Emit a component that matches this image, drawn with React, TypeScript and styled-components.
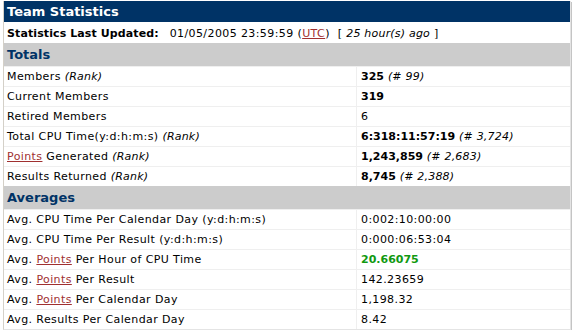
import React from "react";
import styled, { createGlobalStyle } from "styled-components";

const Global = createGlobalStyle`
  html, body { margin: 0; padding: 0; background: #ffffff; }
  body { font-family: "DejaVu Sans", Verdana, sans-serif; font-size: 11px; color: #000; }
`;

const Page = styled.div`
  padding: 1px 0 0 3px;
  width: 571px;
  box-sizing: border-box;
`;

const Panel = styled.div`
  border-left: 1px solid #d4d0c8;
  border-right: 1px solid #e4e4e4;
  border-bottom: 1px solid #e4e4e4;
  box-shadow: 1px 1px 0 #c4c4c4;
`;

const TitleBar = styled.div`
  height: 21px;
  background: #003366;
  color: #ffffff;
  font-weight: bold;
  font-size: 13px;
  line-height: 21px;
  padding-left: 3px;
`;

const UpdatedRow = styled.div`
  height: 20px;
  padding: 1px 0 0 3px;
  line-height: 21px;
  white-space: nowrap;
  letter-spacing: 0.4px;
`;

const Label = styled.b`
  margin-right: 11px;
  letter-spacing: 0.1px;
`;

const Link = styled.a`
  color: #a03030;
  text-decoration: underline;
`;

const Table = styled.table`
  width: 100%;
  border-collapse: separate;
  border-spacing: 0;
  table-layout: fixed;
`;

const SectionHeader = styled.th`
  box-sizing: border-box;
  background: #cccccc;
  color: #003366;
  font-size: 13px;
  font-weight: bold;
  text-align: left;
  height: 23px;
  padding: 0 0 0 3px;
`;

const Cell = styled.td<{ $value?: boolean }>`
  box-sizing: border-box;
  height: 20px;
  padding: 0 0 0 ${(p) => (p.$value ? "4px" : "3px")};
  border-top: 1px solid #efefef;
  border-left: ${(p) => (p.$value ? "1px solid #efefef" : "none")};
  white-space: nowrap;
  vertical-align: middle;
  letter-spacing: 0.4px;
`;

const Strong = styled.b<{ $green?: boolean }>`
  color: ${(p) => (p.$green ? "#119911" : "inherit")};
  letter-spacing: 0;
`;

const Note = styled.i`
  letter-spacing: 0.2px;
`;

const P = () => <Link href="#">Points</Link>;

type Row = { label: React.ReactNode; value: React.ReactNode };

const totals: Row[] = [
  { label: <>Members <Note>(Rank)</Note></>, value: <><Strong>325</Strong> <Note>(# 99)</Note></> },
  { label: "Current Members", value: <Strong>319</Strong> },
  { label: "Retired Members", value: "6" },
  {
    label: <>Total CPU Time(y:d:h:m:s) <Note>(Rank)</Note></>,
    value: <><Strong>6:318:11:57:19</Strong> <Note>(# 3,724)</Note></>,
  },
  {
    label: <><P /> Generated <Note>(Rank)</Note></>,
    value: <><Strong>1,243,859</Strong> <Note>(# 2,683)</Note></>,
  },
  {
    label: <>Results Returned <Note>(Rank)</Note></>,
    value: <><Strong>8,745</Strong> <Note>(# 2,388)</Note></>,
  },
];

const averages: Row[] = [
  { label: "Avg. CPU Time Per Calendar Day (y:d:h:m:s)", value: "0:002:10:00:00" },
  { label: "Avg. CPU Time Per Result (y:d:h:m:s)", value: "0:000:06:53:04" },
  { label: <>Avg. <P /> Per Hour of CPU Time</>, value: <Strong $green>20.66075</Strong> },
  { label: <>Avg. <P /> Per Result</>, value: "142.23659" },
  { label: <>Avg. <P /> Per Calendar Day</>, value: "1,198.32" },
  { label: "Avg. Results Per Calendar Day", value: "8.42" },
];

const Section = ({ title, rows }: { title: string; rows: Row[] }) => (
  <>
    <tr>
      <SectionHeader colSpan={2}>{title}</SectionHeader>
    </tr>
    {rows.map((r, i) => (
      <tr key={i}>
        <Cell>{r.label}</Cell>
        <Cell $value>{r.value}</Cell>
      </tr>
    ))}
  </>
);

export default function App() {
  return (
    <Page>
      <Global />
      <Panel>
        <TitleBar>Team Statistics</TitleBar>
        <UpdatedRow>
          <Label>Statistics Last Updated:</Label>01/05/2005 23:59:59 (<Link href="#">UTC</Link>)&nbsp; [ <Note>25 hour(s) ago</Note> ]
        </UpdatedRow>
        <Table>
          <colgroup>
            <col style={{ width: 352 }} />
            <col />
          </colgroup>
          <tbody>
            <Section title="Totals" rows={totals} />
            <Section title="Averages" rows={averages} />
          </tbody>
        </Table>
      </Panel>
    </Page>
  );
}
